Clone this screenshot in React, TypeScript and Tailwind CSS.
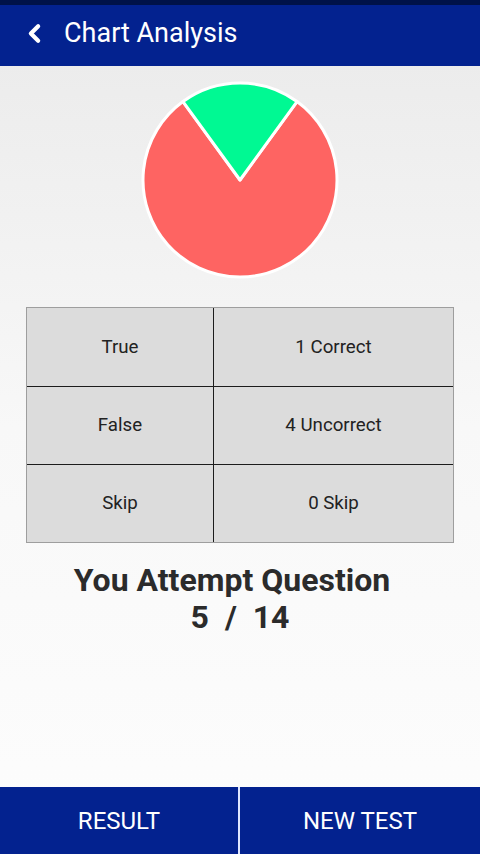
import { ChevronLeft } from "lucide-react";

const rows = [
  { label: "True", value: "1 Correct" },
  { label: "False", value: "4 Uncorrect" },
  { label: "Skip", value: "0 Skip" },
];

function Pie() {
  // 1 of 5 correct -> 72deg green slice centered on top
  const r = 97;
  const cx = 100;
  const cy = 100;
  const a = (36 * Math.PI) / 180;
  const x1 = cx - r * Math.sin(a);
  const x2 = cx + r * Math.sin(a);
  const y = cy - r * Math.cos(a);
  return (
    <svg width="200" height="200" viewBox="0 0 200 200">
      <path
        d={`M${cx} ${cy} L${x2} ${y} A${r} ${r} 0 1 1 ${x1} ${y} Z`}
        fill="#fe6462"
        stroke="#ffffff"
        strokeWidth="3"
        strokeLinejoin="round"
      />
      <path
        d={`M${cx} ${cy} L${x1} ${y} A${r} ${r} 0 0 1 ${x2} ${y} Z`}
        fill="#00f993"
        stroke="#ffffff"
        strokeWidth="3"
        strokeLinejoin="round"
      />
    </svg>
  );
}

export default function App() {
  return (
    <div
      className="flex h-[854px] w-[480px] flex-col bg-gradient-to-b from-[#eaeaea] via-[#f8f8f8] to-[#fdfdfd]"
      style={{ fontFamily: "Roboto, 'Liberation Sans', sans-serif" }}
    >
      <div className="h-[5px] bg-[#001248]" />
      <header className="flex h-[61px] items-center bg-[#03228f] pb-[4px] text-white">
        <ChevronLeft className="ml-[20px] h-[29px] w-[29px]" strokeWidth={3.5} />
        <h1 className="ml-[15px] text-[27px] leading-none">Chart Analysis</h1>
      </header>

      <main className="flex flex-1 flex-col items-center">
        <div className="mt-[14px]">
          <Pie />
        </div>

        <div className="mt-[27px] w-[428px] border border-[#9e9e9e] bg-[#dcdcdc]">
          {rows.map((row, i) => (
            <div
              key={row.label}
              className={`grid h-[78px] grid-cols-[187px_1fr] text-[18.7px] text-[#222] ${i > 0 ? "border-t border-[#1c1c1c]" : ""}`}
            >
              <div className="flex items-center justify-center border-r border-[#1c1c1c]">
                {row.label}
              </div>
              <div className="flex items-center justify-center">{row.value}</div>
            </div>
          ))}
        </div>

        <div className="mt-[19px] flex flex-col items-center text-[#2b2b2b]">
          <p className="mr-[16px] text-[32px] font-bold leading-[36px]">You Attempt Question</p>
          <p className="mt-[1px] text-[32px] font-bold leading-[36px] whitespace-pre">5  /  14</p>
        </div>
      </main>

      <footer className="grid h-[67px] grid-cols-2 bg-[#03228f] text-[24px] text-white">
        <button className="flex items-center justify-center border-r-2 border-[#dfe6ff]">
          RESULT
        </button>
        <button className="flex items-center justify-center">NEW TEST</button>
      </footer>
    </div>
  );
}
